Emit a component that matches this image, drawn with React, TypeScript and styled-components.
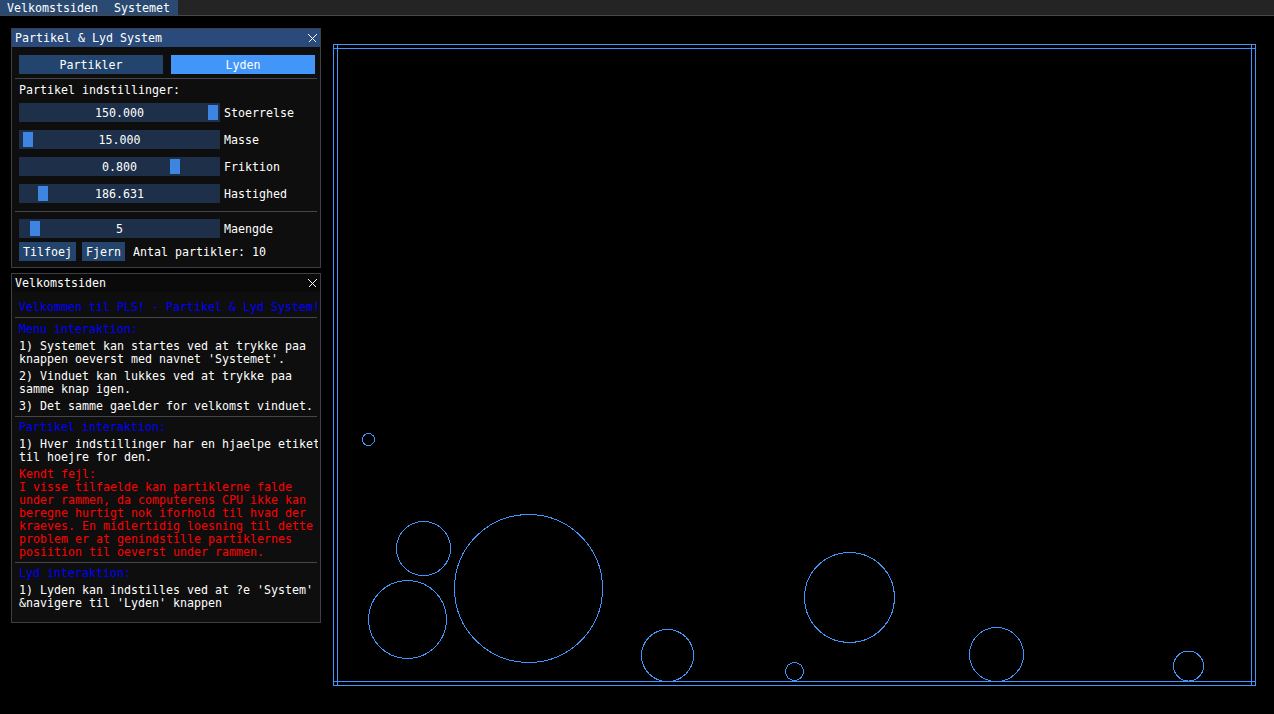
import React from 'react';
import styled, { createGlobalStyle } from 'styled-components';

const GlobalStyle = createGlobalStyle`
  html, body { margin: 0; padding: 0; background: #000; }
  body {
    font-family: "DejaVu Sans Mono", "Liberation Mono", monospace;
    font-size: 11.63px;
    line-height: 13px;
    color: #fff;
  }
  #root { width: 1274px; height: 714px; }
`;

const Screen = styled.div`
  width: 1274px;
  height: 714px;
  display: flex;
  flex-direction: column;
  background: #000;
  overflow: hidden;
`;

const MenuBar = styled.nav`
  display: flex;
  height: 15px;
  flex-shrink: 0;
  background: #242424;
  border-bottom: 1px solid #47474e;
`;

const MenuItem = styled.div<{ $first?: boolean }>`
  padding: 2px 8px 0 ${(p) => (p.$first ? 7 : 8)}px;
  height: 13px;
  background: #2b4a72;
  white-space: pre;
`;

const Desktop = styled.main`
  position: relative;
  flex: 1;
`;

const Canvas = styled.svg`
  position: absolute;
  left: 0;
  top: 0;
`;

const Win = styled.section<{ $x: number; $y: number; $w: number; $h: number }>`
  position: absolute;
  left: ${(p) => p.$x}px;
  top: ${(p) => p.$y}px;
  width: ${(p) => p.$w}px;
  height: ${(p) => p.$h}px;
  box-sizing: border-box;
  border: 1px solid rgba(110, 110, 128, 0.5);
  background: #0e0e0e;
  display: flex;
  flex-direction: column;
  overflow: hidden;
`;

const TitleBar = styled.header<{ $active?: boolean }>`
  height: 18px;
  box-sizing: border-box;
  padding: 3px 0 0 3px;
  display: flex;
  justify-content: space-between;
  align-items: flex-start;
  background: ${(p) => (p.$active ? '#294a7a' : '#0a0a0a')};
  flex-shrink: 0;
`;

const TitleText = styled.span`
  white-space: pre;
`;

const CloseIcon = styled.svg`
  margin: 2px 3px 0 0;
`;

const Body = styled.div`
  flex: 1;
  min-height: 0;
  margin-right: 2px;
  padding: 8px 0 0 7px;
  display: flex;
  flex-direction: column;
  gap: 4px;
  overflow: hidden;
`;

const Separator = styled.hr<{ $top?: number; $after?: number }>`
  margin: ${(p) => p.$top ?? 0}px 0 ${(p) => p.$after ?? 0}px -4px;
  width: 302px;
  height: 1px;
  border: none;
  background: #45454d;
  flex-shrink: 0;
`;

const ButtonRow = styled.div`
  display: flex;
  gap: 8px;
`;

const Button = styled.button<{ $active?: boolean; $w?: number; $gapAfter?: number }>`
  box-sizing: border-box;
  height: 19px;
  ${(p) => (p.$w ? `width: ${p.$w}px;` : '')}
  margin: 0 ${(p) => p.$gapAfter ?? 0}px 0 0;
  padding: 2px 4px 0;
  border: none;
  background: ${(p) => (p.$active ? '#4296fa' : '#23456d')};
  color: #fff;
  font: inherit;
  line-height: 17px;
  text-align: center;
  white-space: pre;
  flex-shrink: 0;
`;

const Label = styled.p<{ $tone?: 'white' | 'blue' | 'red' }>`
  margin: 0 0 -1px;
  padding-top: 1px;
  white-space: pre;
  line-height: 13px;
  color: ${(p) => (p.$tone === 'blue' ? '#0000ff' : p.$tone === 'red' ? '#ff0000' : '#ffffff')};
`;

const SliderStack = styled.div<{ $top: number }>`
  display: flex;
  flex-direction: column;
  gap: 8px;
  margin-top: ${(p) => p.$top}px;
`;

const SliderRow = styled.div`
  display: flex;
  align-items: flex-start;
  gap: 4px;
  height: 19px;
`;

const SliderFrame = styled.div`
  position: relative;
  box-sizing: border-box;
  width: 201px;
  height: 19px;
  padding-top: 2px;
  background: #1d2f49;
  text-align: center;
  line-height: 17px;
  flex-shrink: 0;
`;

const Grab = styled.div`
  position: absolute;
  top: 2px;
  width: 10px;
  height: 15px;
  background: #3d85e0;
`;

const SliderValue = styled.span`
  position: relative;
`;

const SliderLabel = styled.span`
  box-sizing: border-box;
  height: 19px;
  padding-top: 2px;
  line-height: 17px;
  white-space: pre;
`;

const ActionRow = styled.div`
  display: flex;
  align-items: center;
`;

type SliderDef = { label: string; value: string; num: number; min: number; max: number };

const sliders: SliderDef[] = [
  { label: 'Stoerrelse', value: '150.000', num: 150, min: 1, max: 150 },
  { label: 'Masse', value: '15.000', num: 15, min: 1, max: 1300 },
  { label: 'Friktion', value: '0.800', num: 0.8, min: 0, max: 1 },
  { label: 'Hastighed', value: '186.631', num: 186.631, min: 0, max: 2000 },
];

const amount: SliderDef = { label: 'Maengde', value: '5', num: 5, min: 1, max: 84 };

function Slider({ def }: { def: SliderDef }) {
  const frac = (def.num - def.min) / (def.max - def.min);
  const left = 2 + Math.floor(frac * 187);
  return (
    <SliderRow>
      <SliderFrame>
        <Grab style={{ left }} />
        <SliderValue>{def.value}</SliderValue>
      </SliderFrame>
      <SliderLabel>{def.label}</SliderLabel>
    </SliderRow>
  );
}

function Close() {
  return (
    <CloseIcon width="9" height="9" viewBox="0 0 9 9" shapeRendering="crispEdges">
      <line x1="0.5" y1="0.5" x2="8.5" y2="8.5" stroke="#fff" strokeWidth="1" />
      <line x1="8.5" y1="0.5" x2="0.5" y2="8.5" stroke="#fff" strokeWidth="1" />
    </CloseIcon>
  );
}

const circles: [number, number, number][] = [
  [368.5, 439.5, 6],
  [423.5, 548.5, 27],
  [407.5, 619.5, 39],
  [528.5, 588.5, 74],
  [667.5, 655.5, 26],
  [794.5, 671.5, 9],
  [849.5, 597.5, 45],
  [996.5, 654.5, 27],
  [1188.5, 666, 15],
];

function Simulation() {
  const c = '#4296fa';
  return (
    <Canvas width="1274" height="698" viewBox="0 16 1274 698" shapeRendering="crispEdges">
      {[44.5, 48.5, 681.5, 685.5].map((y) => (
        <line key={'h' + y} x1="333" y1={y} x2="1256" y2={y} stroke={c} strokeWidth="1" />
      ))}
      {[333.5, 337.5, 1251.5, 1255.5].map((x) => (
        <line key={'v' + x} x1={x} y1="44" x2={x} y2="686" stroke={c} strokeWidth="1" />
      ))}
      {circles.map(([cx, cy, r], i) => (
        <circle key={i} cx={cx} cy={cy} r={r} fill="none" stroke={c} strokeWidth="1" />
      ))}
    </Canvas>
  );
}

export default function App() {
  return (
    <>
      <GlobalStyle />
      <Screen>
        <MenuBar>
          <MenuItem $first>Velkomstsiden</MenuItem>
          <MenuItem>Systemet</MenuItem>
        </MenuBar>
        <Desktop>
          <Simulation />
          <Win $x={11} $y={12} $w={310} $h={240}>
            <TitleBar $active>
              <TitleText>Partikel &amp; Lyd System</TitleText>
              <Close />
            </TitleBar>
            <Body>
              <ButtonRow>
                <Button $w={144}>Partikler</Button>
                <Button $w={144} $active>
                  Lyden
                </Button>
              </ButtonRow>
              <Separator />
              <Label>Partikel indstillinger:</Label>
              <SliderStack $top={3}>
                {sliders.map((s) => (
                  <Slider key={s.label} def={s} />
                ))}
              </SliderStack>
              <Separator $top={4} />
              <SliderStack $top={3}>
                <Slider def={amount} />
              </SliderStack>
              <ActionRow>
                <Button $gapAfter={6}>Tilfoej</Button>
                <Button $gapAfter={8}>Fjern</Button>
                <Label>Antal partikler: 10</Label>
              </ActionRow>
            </Body>
          </Win>
          <Win $x={11} $y={257} $w={310} $h={350}>
            <TitleBar>
              <TitleText>Velkomstsiden</TitleText>
              <Close />
            </TitleBar>
            <Body>
              <Label $tone="blue">Velkommen til PLS! - Partikel &amp; Lyd System!</Label>
              <Separator />
              <Label $tone="blue">Menu interaktion:</Label>
              <Label>{'1) Systemet kan startes ved at trykke paa\nknappen oeverst med navnet \'Systemet\'.'}</Label>
              <Label>{'2) Vinduet kan lukkes ved at trykke paa\nsamme knap igen.'}</Label>
              <Label>3) Det samme gaelder for velkomst vinduet.</Label>
              <Separator $after={-1} />
              <Label $tone="blue">Partikel interaktion:</Label>
              <Label>{'1) Hver indstillinger har en hjaelpe etiket\ntil hoejre for den.'}</Label>
              <Label $tone="red">
                {'Kendt fejl:\nI visse tilfaelde kan partiklerne falde\nunder rammen, da computerens CPU ikke kan\nberegne hurtigt nok iforhold til hvad der\nkraeves. En midlertidig loesning til dette\nproblem er at genindstille partiklernes\nposiition til oeverst under rammen.'}
              </Label>
              <Separator $after={-1} />
              <Label $tone="blue">Lyd interaktion:</Label>
              <Label>{'1) Lyden kan indstilles ved at ?e \'System\'\n&navigere til \'Lyden\' knappen'}</Label>
            </Body>
          </Win>
        </Desktop>
      </Screen>
    </>
  );
}
